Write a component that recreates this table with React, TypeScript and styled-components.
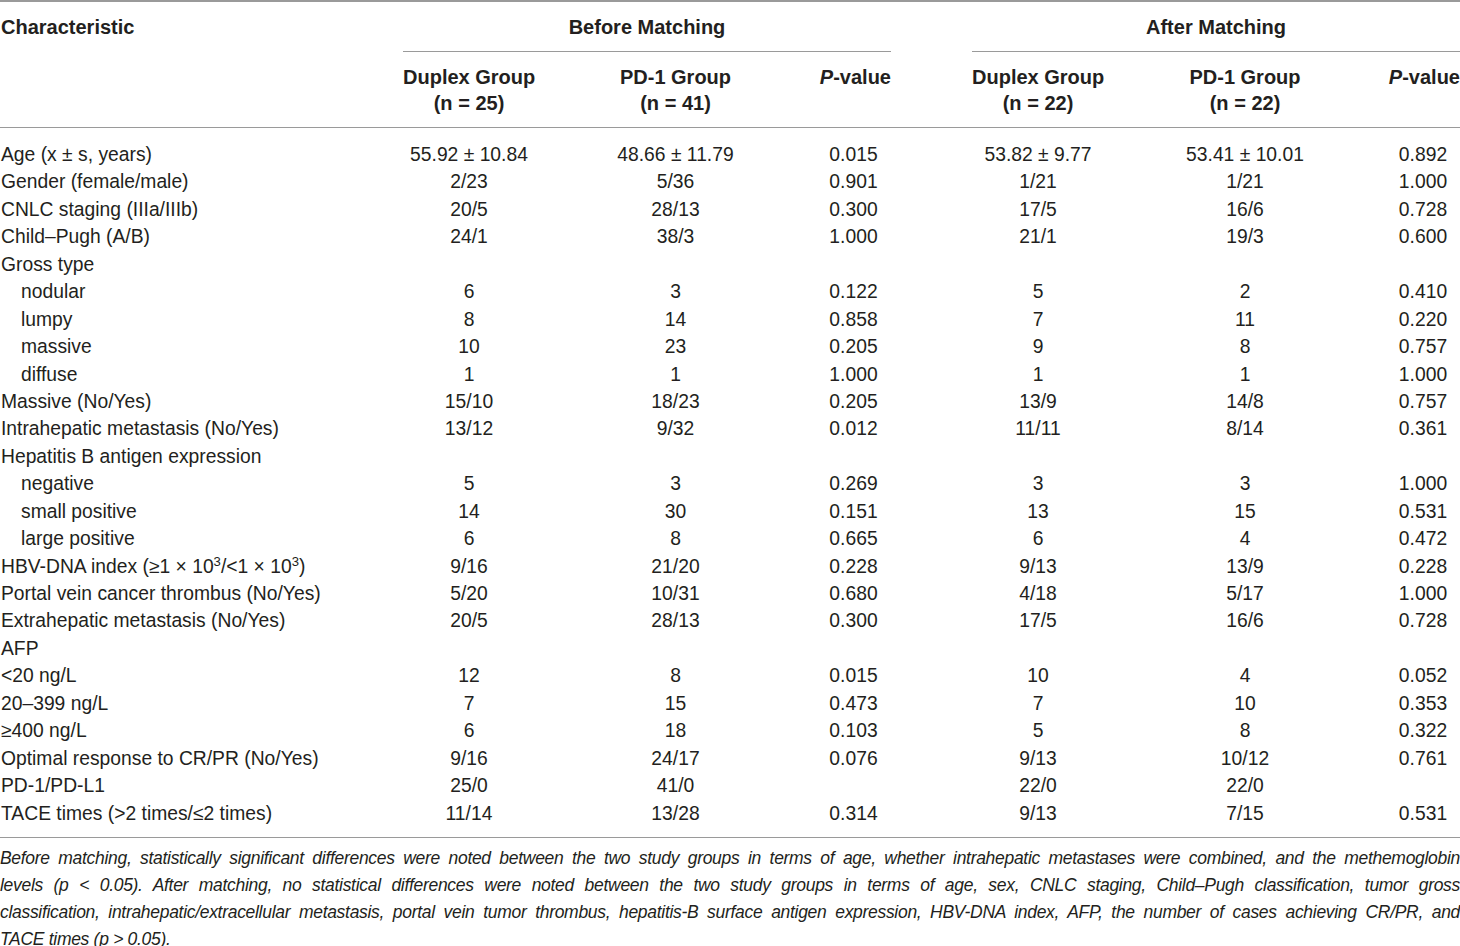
import React from "react";
import styled, { createGlobalStyle } from "styled-components";

const GlobalStyle = createGlobalStyle`
  html, body {
    margin: 0;
    padding: 0;
    background: #ffffff;
  }
  body {
    font-family: "Liberation Sans", Arial, Helvetica, sans-serif;
    color: #231f20;
  }
`;

const COLS = "322px 132px 119px 75px 132px 120px 74px";

const Page = styled.div`
  width: 1460px;
  font-size: 19.3px;
`;

const Header = styled.div`
  display: grid;
  grid-template-columns: ${COLS};
  column-gap: 81px;
  border-top: 2px solid #9a9a9a;
  border-bottom: 1px solid #9a9a9a;
  padding: 12px 0 11px;
`;

const HeadCell = styled.div<{ $col: string; $row: number; $align?: string }>`
  grid-column: ${(p) => p.$col};
  grid-row: ${(p) => p.$row};
  font-weight: bold;
  font-size: 20px;
  line-height: 26px;
  text-align: ${(p) => p.$align || "center"};
  white-space: nowrap;
  padding-left: ${(p) => (p.$align === "left" ? "1px" : "0")};
`;

const GroupTitle = styled.div<{ $col: string }>`
  grid-column: ${(p) => p.$col};
  grid-row: 1;
  font-weight: bold;
  font-size: 20px;
  line-height: 27px;
  text-align: center;
  border-bottom: 1px solid #9a9a9a;
  padding-bottom: 10px;
  margin-bottom: 12px;
`;

const Body = styled.div`
  padding: 13px 0 10px;
  border-bottom: 1px solid #9a9a9a;
`;

const Row = styled.div`
  display: grid;
  grid-template-columns: ${COLS};
  column-gap: 81px;
  height: 27.45px;
  line-height: 27.45px;
  align-items: center;
`;

const Label = styled.div<{ $indent?: boolean }>`
  padding-left: ${(p) => (p.$indent ? "21px" : "1px")};
  white-space: nowrap;
`;

const Value = styled.div`
  justify-self: center;
  white-space: nowrap;
`;

const Sup = styled.sup`
  font-size: 0.68em;
  line-height: 0;
  vertical-align: 0.55em;
`;

const Note = styled.div`
  margin-top: 7px;
  font-style: italic;
  font-size: 17.5px;
  letter-spacing: -0.3px;
  line-height: 27px;
  color: #231f20;
`;

const NoteLine = styled.span<{ $last?: boolean }>`
  display: block;
  white-space: nowrap;
  text-align: justify;
  text-align-last: ${(p) => (p.$last ? "left" : "justify")};
`;

type RowData = {
  label: React.ReactNode;
  indent?: boolean;
  values?: string[];
};

const rows: RowData[] = [
  { label: "Age (x ± s, years)", values: ["55.92 ± 10.84", "48.66 ± 11.79", "0.015", "53.82 ± 9.77", "53.41 ± 10.01", "0.892"] },
  { label: "Gender (female/male)", values: ["2/23", "5/36", "0.901", "1/21", "1/21", "1.000"] },
  { label: "CNLC staging (IIIa/IIIb)", values: ["20/5", "28/13", "0.300", "17/5", "16/6", "0.728"] },
  { label: "Child–Pugh (A/B)", values: ["24/1", "38/3", "1.000", "21/1", "19/3", "0.600"] },
  { label: "Gross type" },
  { label: "nodular", indent: true, values: ["6", "3", "0.122", "5", "2", "0.410"] },
  { label: "lumpy", indent: true, values: ["8", "14", "0.858", "7", "11", "0.220"] },
  { label: "massive", indent: true, values: ["10", "23", "0.205", "9", "8", "0.757"] },
  { label: "diffuse", indent: true, values: ["1", "1", "1.000", "1", "1", "1.000"] },
  { label: "Massive (No/Yes)", values: ["15/10", "18/23", "0.205", "13/9", "14/8", "0.757"] },
  { label: "Intrahepatic metastasis (No/Yes)", values: ["13/12", "9/32", "0.012", "11/11", "8/14", "0.361"] },
  { label: "Hepatitis B antigen expression" },
  { label: "negative", indent: true, values: ["5", "3", "0.269", "3", "3", "1.000"] },
  { label: "small positive", indent: true, values: ["14", "30", "0.151", "13", "15", "0.531"] },
  { label: "large positive", indent: true, values: ["6", "8", "0.665", "6", "4", "0.472"] },
  {
    label: (
      <>
        HBV-DNA index (≥1 × 10<Sup>3</Sup>/&lt;1 × 10<Sup>3</Sup>)
      </>
    ),
    values: ["9/16", "21/20", "0.228", "9/13", "13/9", "0.228"],
  },
  { label: "Portal vein cancer thrombus (No/Yes)", values: ["5/20", "10/31", "0.680", "4/18", "5/17", "1.000"] },
  { label: "Extrahepatic metastasis (No/Yes)", values: ["20/5", "28/13", "0.300", "17/5", "16/6", "0.728"] },
  { label: "AFP" },
  { label: "<20 ng/L", values: ["12", "8", "0.015", "10", "4", "0.052"] },
  { label: "20–399 ng/L", values: ["7", "15", "0.473", "7", "10", "0.353"] },
  { label: "≥400 ng/L", values: ["6", "18", "0.103", "5", "8", "0.322"] },
  { label: "Optimal response to CR/PR (No/Yes)", values: ["9/16", "24/17", "0.076", "9/13", "10/12", "0.761"] },
  { label: "PD-1/PD-L1", values: ["25/0", "41/0", "", "22/0", "22/0", ""] },
  { label: "TACE times (>2 times/≤2 times)", values: ["11/14", "13/28", "0.314", "9/13", "7/15", "0.531"] },
];

const GroupHeads = ({ start, n }: { start: number; n: string[] }) => (
  <>
    <HeadCell $col={`${start}`} $row={2}>
      Duplex Group
      <br />
      (n = {n[0]})
    </HeadCell>
    <HeadCell $col={`${start + 1}`} $row={2}>
      PD-1 Group
      <br />
      (n = {n[1]})
    </HeadCell>
    <HeadCell $col={`${start + 2}`} $row={2} $align="right">
      <i>P</i>-value
    </HeadCell>
  </>
);

export default function App() {
  return (
    <Page>
      <GlobalStyle />
      <Header>
        <HeadCell $col="1" $row={1} $align="left" style={{ lineHeight: "27px" }}>
          Characteristic
        </HeadCell>
        <GroupTitle $col="2 / 5">Before Matching</GroupTitle>
        <GroupTitle $col="5 / 8">After Matching</GroupTitle>
        <GroupHeads start={2} n={["25", "41"]} />
        <GroupHeads start={5} n={["22", "22"]} />
      </Header>
      <Body>
        {rows.map((r, i) => (
          <Row key={i}>
            <Label $indent={r.indent}>{r.label}</Label>
            {(r.values || []).map((v, j) => (
              <Value key={j}>{v}</Value>
            ))}
          </Row>
        ))}
      </Body>
      <Note>
        <NoteLine>
          Before matching, statistically significant differences were noted between the two study groups in terms of age, whether intrahepatic metastases were combined, and the methemoglobin
        </NoteLine>
        <NoteLine>
          levels (p &lt; 0.05). After matching, no statistical differences were noted between the two study groups in terms of age, sex, CNLC staging, Child–Pugh classification, tumor gross
        </NoteLine>
        <NoteLine>
          classification, intrahepatic/extracellular metastasis, portal vein tumor thrombus, hepatitis-B surface antigen expression, HBV-DNA index, AFP, the number of cases achieving CR/PR, and
        </NoteLine>
        <NoteLine $last>TACE times (p &gt; 0.05).</NoteLine>
      </Note>
    </Page>
  );
}
